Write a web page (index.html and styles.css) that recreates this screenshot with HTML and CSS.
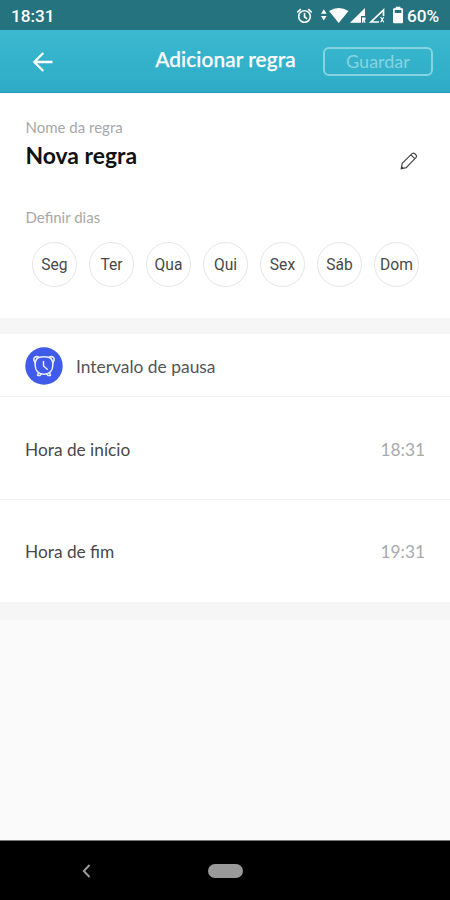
FILE: index.html
```html
<!DOCTYPE html>
<html lang="pt">
<head>
<meta charset="utf-8">
<title>Adicionar regra</title>
<link rel="stylesheet" href="styles.css">
</head>
<body>
<div class="screen">
  <div class="statusbar">
    <span class="clock">18:31</span>
    <svg class="status-icons" width="110" height="20" viewBox="295 6 110 20">
      <g fill="none" stroke="#fff" stroke-width="1.6">
        <circle cx="304.500" cy="16.500" r="5.800"/>
        <path d="M304.500 13v4l2.700 1.700M297.300 12.400l3.500-3.200M311.700 12.400l-3.500-3.200"/>
      </g>
      <g fill="#fff">
        <path d="M321 13.800l2.800-4.500 2.800 4.500zM321 16l2.800 4.500 2.800-4.500z"/>
        <path d="M329 11q9.800-6.200 19.500 0l-9.800 12z"/>
        <path d="M350 22.800L365 8v8h-4v6.800z"/>
        <path d="M362 17.500h3.500v2.200l-1 .6 1.200 2.500h-1.300l-1-2.100v2.100H362z"/>
        <path d="M395.800 8.200V6.800h4.600v1.400h1.600q1 0 1 1v13.100q0 1-1 1h-8q-1 0-1-1V9.200q0-1 1-1zM394.800 10v3h6.600v-3z" fill-rule="evenodd"/>
      </g>
      <path d="M383.500 16V10L371 22h8" fill="none" stroke="#fff" stroke-width="1.700"/>
      <path d="M380.700 17l3 5.300m0-5.300l-3 5.300" fill="none" stroke="#fff" stroke-width="1.200"/>
    </svg>
    <span class="battery">60%</span>
  </div>
  <header class="appbar">
    <svg class="back" width="22" height="22" viewBox="0 0 22 22"><path d="M20.500 11H2.500M11.300 2L2.300 11l9 9" fill="none" stroke="#fff" stroke-width="2.300"/></svg>
    <h1 class="title">Adicionar regra</h1>
    <button class="save">Guardar</button>
  </header>
  <section class="rule">
    <div class="name-row">
      <div>
        <div class="label">Nome da regra</div>
        <div class="name">Nova regra</div>
      </div>
      <svg class="edit" width="18" height="18" viewBox="0 0 18 18"><path d="M1.200 16.800l1-5.500L12.300 1.400q1.200-.8 2.600.4l1.200 1.300q.9 1.200 0 2.300L6.200 15.700zM11 2.900l3.700 3.800" fill="none" stroke="#484848" stroke-width="1.200"/><path d="M1.200 16.800l.4-2.600 2.200 1.900z" fill="#333"/></svg>
    </div>
    <div class="label days-label">Definir dias</div>
    <div class="days">
      <span class="day">Seg</span><span class="day">Ter</span><span class="day">Qua</span><span class="day">Qui</span><span class="day">Sex</span><span class="day">Sáb</span><span class="day">Dom</span>
    </div>
  </section>
  <section class="pause">
    <div class="pause-head">
      <svg width="38" height="38" viewBox="0 0 38 38">
        <circle cx="19" cy="19" r="18.700" fill="#405bea"/>
        <g fill="none" stroke="#e8ecff" stroke-width="1.500" stroke-linecap="round" stroke-linejoin="round">
          <path d="M13.500 10.500Q19 9 24.500 10.500Q28.300 13 27.800 18.500Q27.600 26.800 19 27.300Q10.400 26.800 10.200 18.500Q9.700 13 13.500 10.500z"/>
          <path d="M18.500 14.500V19l3.800 3.200M10 15.500q-1.900-2.700-.7-4.800 1.900-1.900 4.700-.4M28 15.500q1.900-2.700.7-4.800-1.900-1.900-4.700-.4M13.300 25.800l-.8 2.700h2.500l1.300-1.500M24.700 25.800l.8 2.700H23l-1.300-1.500"/>
        </g>
      </svg>
      <span class="pause-title">Intervalo de pausa</span>
    </div>
    <div class="time-row start"><span>Hora de início</span><span class="time">18:31</span></div>
    <div class="time-row"><span>Hora de fim</span><span class="time">19:31</span></div>
  </section>
  <div class="filler"></div>
  <nav class="navbar">
    <svg class="nav-back" width="9" height="14" viewBox="0 0 9 14"><path d="M7.500 1L1.800 7l5.700 6" fill="none" stroke="#999" stroke-width="2"/></svg>
    <span class="home"></span>
  </nav>
</div>
</body>
</html>
```
FILE: styles.css
```css
* { box-sizing: border-box; }
body { margin: 0; font-family: Lato, sans-serif; background: #fafafa; }
svg { display: block; flex: none; }
.screen { width: 450px; height: 900px; display: flex; flex-direction: column; overflow: hidden; }
.statusbar {
  height: 30px; flex: none; padding: 2px 9px 0 11px; display: flex; align-items: center;
  background: #24737f; color: #fff; font: 500 18px/28px Roboto, sans-serif;
}
.clock { font-size: 17.2px; }
.status-icons { margin-left: auto; }
.battery { width: 34px; margin-left: 2px; font-size: 17.2px; white-space: nowrap; }
.appbar {
  height: 63px; flex: none; display: grid; grid-template-columns: 123px 200px 110px; align-items: center;
  background: linear-gradient(#3bb9d0, #2eabc6); border-bottom: 1px solid #249bb4;
}
.back { margin: 1px 0 0 32px; }
.title { margin: 0; padding: 0 0 4px 5px; text-align: center; color: #fff; font-size: 20.8px; font-weight: 500; letter-spacing: .1px; line-height: 26px; white-space: nowrap; -webkit-text-stroke: .25px #fff; }
.save {
  height: 29px; padding: 0; border: 2px solid #86d4e2; border-radius: 6px; background: none;
  color: #86d4e2; font: 400 18px/24px Lato, sans-serif;
}
.rule { height: 225px; flex: none; padding: 24px 26px 0 25.5px; background: #fff; }
.name-row { display: flex; justify-content: space-between; }
.label { color: #a8a8a8; font-size: 15px; line-height: 20px; }
.name { color: #111; font-size: 22.9px; font-weight: 700; line-height: 36px; }
.edit { margin: 35px 6px 0 0; }
.days-label { margin-top: 34px; }
.days { display: flex; justify-content: space-between; margin: 15px 5px 0 6.5px; }
.day {
  width: 45px; height: 45px; border: 1.5px solid #e6e6e6; border-radius: 50%;
  display: flex; align-items: center; justify-content: center;
  color: #484848; font: 400 15.6px/20px Roboto, sans-serif;
}
.pause { flex: none; border-top: 16px solid #f6f6f6; border-bottom: 18px solid #f6f6f6; background: #fff; }
.pause-head { height: 63px; padding: 1px 25px 0; display: flex; align-items: center; gap: 13px; border-bottom: 1px solid #f3f3f3; }
.pause-title { padding-top: 2px; color: #555; font-size: 17.4px; }
.time-row {
  height: 103px; padding: 1px 25px 0 25px; display: flex; align-items: center; justify-content: space-between;
  color: #484848; font-size: 17.3px; border-bottom: 1px solid #f3f3f3;
}
.start { padding-top: 3px; }
.time-row:last-child { height: 102px; border-bottom: 0; }
.time { color: #aaa; }
.filler { flex: 1; background: #fafafa; }
.navbar { height: 60px; flex: none; display: grid; grid-template-columns: 208px 35px; align-items: center; background: #000; border-top: 1px solid #777; }
.nav-back { margin-left: 82px; }
.home { height: 14px; border-radius: 7px; background: #999; }
```
